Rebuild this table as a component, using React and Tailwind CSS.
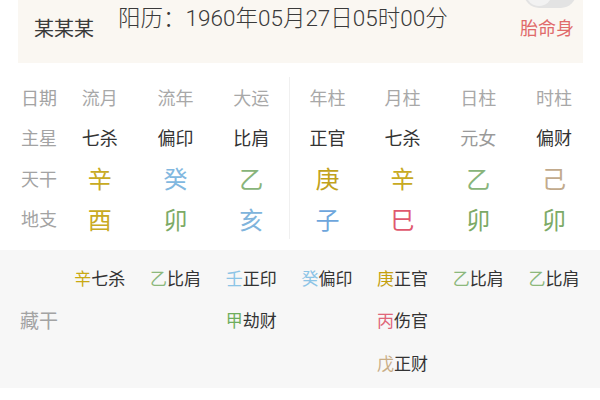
import React from "react";

const COLS = ["流月", "流年", "大运", "年柱", "月柱", "日柱", "时柱"];

const MAIN_STARS = [
  { t: "七杀", c: "text-[#333333]" },
  { t: "偏印", c: "text-[#333333]" },
  { t: "比肩", c: "text-[#333333]" },
  { t: "正官", c: "text-[#333333]" },
  { t: "七杀", c: "text-[#333333]" },
  { t: "元女", c: "text-[#9a9a9a]" },
  { t: "偏财", c: "text-[#333333]" },
];

const STEMS = [
  { t: "辛", c: "text-[#c8aa22]" },
  { t: "癸", c: "text-[#82b8e0]" },
  { t: "乙", c: "text-[#88b47a]" },
  { t: "庚", c: "text-[#c2a21c]" },
  { t: "辛", c: "text-[#c8aa22]" },
  { t: "乙", c: "text-[#88b47a]" },
  { t: "己", c: "text-[#c2aa8c]" },
];

const BRANCHES = [
  { t: "酉", c: "text-[#c8aa22]" },
  { t: "卯", c: "text-[#7caa66]" },
  { t: "亥", c: "text-[#80b4dc]" },
  { t: "子", c: "text-[#6ea6dc]" },
  { t: "巳", c: "text-[#e0586e]" },
  { t: "卯", c: "text-[#7caa66]" },
  { t: "卯", c: "text-[#7caa66]" },
];

// hidden stems per column, [stem, stemColor, god]
const HIDDEN = [
  [["辛", "text-[#c9a912]", "七杀"]],
  [["乙", "text-[#8cb87c]", "比肩"]],
  [["壬", "text-[#8cc4e6]", "正印"], ["甲", "text-[#6fae5c]", "劫财"]],
  [["癸", "text-[#8cc4e6]", "偏印"]],
  [["庚", "text-[#c4a010]", "正官"], ["丙", "text-[#e0667a]", "伤官"], ["戊", "text-[#c9ad86]", "正财"]],
  [["乙", "text-[#8cb87c]", "比肩"]],
  [["乙", "text-[#8cb87c]", "比肩"]],
];

const Cell = ({ i, children, className = "" }) => (
  <div
    className={`w-[75.7px] h-[40.5px] flex items-center justify-center ${
      i === 3 ? "border-l border-[#f0f0f0]" : ""
    } ${className}`}
  >
    {children}
  </div>
);

const Label = ({ children }) => (
  <div className="w-[62px] h-[40.5px] pl-[21px] flex items-center text-[18px] text-[#a3a3a3]">
    {children}
  </div>
);

export default function App() {
  return (
    <div className="w-[600px] h-[400px] bg-white overflow-hidden font-['Noto_Sans_CJK_SC',sans-serif]">
      {/* header card */}
      <div className="relative ml-[18px] w-[565px] h-[63px] bg-[#faf7f2] flex items-start">
        <div className="mt-[14px] ml-[16px] text-[20px] leading-[28px] text-[#3a3a3a]">某某某</div>
        <div className="mt-[3px] ml-[24px] text-[22.5px] leading-[30px] text-[#3a3a3a] font-['Roboto','Noto_Sans_CJK_SC',sans-serif] font-light">
          阳历：1960年05月27日05时00分
        </div>
        <div className="ml-auto mr-[9px] mt-[15px] text-[18px] leading-[24px] text-[#e06a6a]">胎命身</div>
        <div className="absolute left-[506px] top-[-22px] w-[52px] h-[30px] rounded-full bg-[#e3e3e3]">
          <div className="absolute left-[2px] top-[2px] w-[26px] h-[26px] rounded-full bg-[#f2f2f2]" />
        </div>
      </div>

      {/* pillars */}
      <div className="pt-[14px]">
        <div className="flex">
          <Label>日期</Label>
          {COLS.map((t, i) => (
            <Cell key={i} i={i} className="text-[18px] text-[#a8a8a8]">
              {t}
            </Cell>
          ))}
        </div>
        <div className="flex">
          <Label>主星</Label>
          {MAIN_STARS.map((s, i) => (
            <Cell key={i} i={i} className={`text-[18px] ${s.c}`}>
              {s.t}
            </Cell>
          ))}
        </div>
        <div className="flex">
          <Label>天干</Label>
          {STEMS.map((s, i) => (
            <Cell key={i} i={i} className={`text-[24px] ${s.c}`}>
              {s.t}
            </Cell>
          ))}
        </div>
        <div className="flex">
          <Label>地支</Label>
          {BRANCHES.map((s, i) => (
            <Cell key={i} i={i} className={`text-[24px] ${s.c}`}>
              {s.t}
            </Cell>
          ))}
        </div>
      </div>

      {/* hidden stems */}
      <div className="mt-[11px] h-[138px] bg-[#f7f7f7] pt-[6px] flex">
        <div className="w-[62px] h-[127.5px] pl-[20px] flex items-center text-[19px] text-[#a3a3a3]">藏干</div>
        {HIDDEN.map((col, i) => (
          <div key={i} className="w-[75.7px] flex flex-col">
            {col.map(([s, c, g], j) => (
              <div key={j} className="h-[42.5px] flex items-center justify-center text-[17px] text-[#333333]">
                <span className={c}>{s}</span>
                {g}
              </div>
            ))}
          </div>
        ))}
      </div>
    </div>
  );
}
